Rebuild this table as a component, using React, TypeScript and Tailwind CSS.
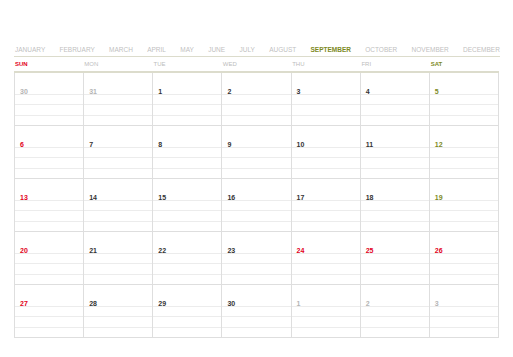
import React from "react";

const months = [
  "JANUARY","FEBRUARY","MARCH","APRIL","MAY","JUNE","JULY","AUGUST","SEPTEMBER","OCTOBER","NOVEMBER","DECEMBER",
];
const days = ["SUN","MON","TUE","WED","THU","FRI","SAT"];

type Cell = { n: number; kind: "other" | "sun" | "sat" | "norm" | "hol" };

const weeks: Cell[][] = [
  [{n:30,kind:"other"},{n:31,kind:"other"},{n:1,kind:"norm"},{n:2,kind:"norm"},{n:3,kind:"norm"},{n:4,kind:"norm"},{n:5,kind:"sat"}],
  [{n:6,kind:"sun"},{n:7,kind:"norm"},{n:8,kind:"norm"},{n:9,kind:"norm"},{n:10,kind:"norm"},{n:11,kind:"norm"},{n:12,kind:"sat"}],
  [{n:13,kind:"sun"},{n:14,kind:"norm"},{n:15,kind:"norm"},{n:16,kind:"norm"},{n:17,kind:"norm"},{n:18,kind:"norm"},{n:19,kind:"sat"}],
  [{n:20,kind:"sun"},{n:21,kind:"norm"},{n:22,kind:"norm"},{n:23,kind:"norm"},{n:24,kind:"hol"},{n:25,kind:"hol"},{n:26,kind:"hol"}],
  [{n:27,kind:"sun"},{n:28,kind:"norm"},{n:29,kind:"norm"},{n:30,kind:"norm"},{n:1,kind:"other"},{n:2,kind:"other"},{n:3,kind:"other"}],
];

function numColor(k: Cell["kind"]) {
  switch (k) {
    case "other": return "text-[#b4b4b4]";
    case "sun": return "text-[#e2001a]";
    case "hol": return "text-[#e2001a]";
    case "sat": return "text-[#7d8a1e]";
    default: return "text-[#333333]";
  }
}

export default function App() {
  return (
    <div
      className="w-[513px] h-[357px] bg-white pt-[44px] px-[14px]"
      style={{ fontFamily: '"Liberation Sans", Arial, sans-serif' }}
    >
      <div className="flex justify-between pl-[1px] mr-[-1px] h-[13px] items-center border-b border-[#dcdccc]">
        {months.map((m) => (
          <span
            key={m}
            className={
              m === "SEPTEMBER"
                ? "text-[6.5px] font-bold text-[#7d8a1e] leading-none"
                : "text-[6.5px] text-[#bfbfbf] leading-none"
            }
          >
            {m}
          </span>
        ))}
      </div>
      <div className="grid grid-cols-7 h-[16px] items-center border-b-2 border-[#dcdccc]">
        {days.map((d) => (
          <span
            key={d}
            className={
              "pl-[1px] text-[6px] leading-none " +
              (d === "SUN"
                ? "font-bold text-[#e2001a]"
                : d === "SAT"
                ? "font-bold text-[#7d8a1e]"
                : "text-[#bdbdbd]")
            }
          >
            {d}
          </span>
        ))}
      </div>
      <div className="border-l border-[#dedede]">
        {weeks.map((w, wi) => (
          <div key={wi} className="grid grid-cols-7">
            {w.map((c, ci) => (
              <div key={ci} className="flex flex-col border-r border-b border-[#dedede]">
                <div className="h-[22px] border-b border-[#ececec] pl-[5px] pt-[4px]">
                  <span className={"text-[7px] font-bold leading-none " + numColor(c.kind)}>{c.n}</span>
                </div>
                <div className="h-[10px] border-b border-[#ececec]" />
                <div className="h-[11px] border-b border-[#ececec]" />
                <div className="h-[9px]" />
              </div>
            ))}
          </div>
        ))}
      </div>
    </div>
  );
}
